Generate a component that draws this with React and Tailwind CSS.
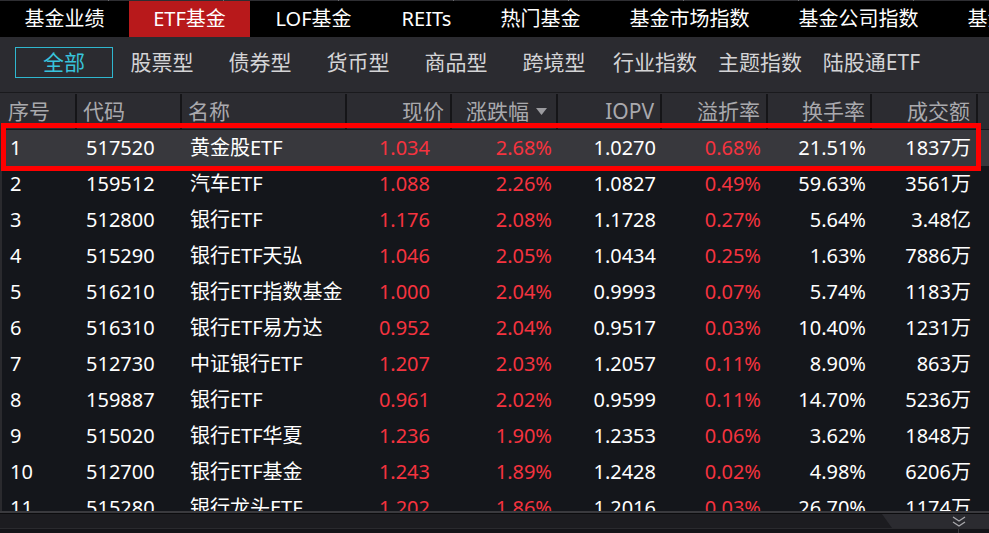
import React from "react";

const topTabs = [
  { t: "基金业绩", w: "w-[129px]" },
  { t: "ETF基金", w: "w-[121px]", active: true },
  { t: "LOF基金", w: "w-[127px]" },
  { t: "REITs", w: "w-[99px]" },
  { t: "热门基金", w: "w-[129px]" },
  { t: "基金市场指数", w: "w-[169px]" },
  { t: "基金公司指数", w: "w-[169px]" },
  { t: "基金经理", w: "w-[129px]" },
];

const subTabs = [
  { t: "全部", w: "w-[98px]", active: true },
  { t: "股票型", w: "w-[98px]" },
  { t: "债券型", w: "w-[98px]" },
  { t: "货币型", w: "w-[98px]" },
  { t: "商品型", w: "w-[98px]" },
  { t: "跨境型", w: "w-[98px]" },
  { t: "行业指数", w: "w-[104px]" },
  { t: "主题指数", w: "w-[106px]" },
  { t: "陆股通ETF", w: "w-[117px]" },
];

const rows = [
  ["1", "517520", "黄金股ETF", "1.034", "2.68%", "1.0270", "0.68%", "21.51%", "1837万"],
  ["2", "159512", "汽车ETF", "1.088", "2.26%", "1.0827", "0.49%", "59.63%", "3561万"],
  ["3", "512800", "银行ETF", "1.176", "2.08%", "1.1728", "0.27%", "5.64%", "3.48亿"],
  ["4", "515290", "银行ETF天弘", "1.046", "2.05%", "1.0434", "0.25%", "1.63%", "7886万"],
  ["5", "516210", "银行ETF指数基金", "1.000", "2.04%", "0.9993", "0.07%", "5.74%", "1183万"],
  ["6", "516310", "银行ETF易方达", "0.952", "2.04%", "0.9517", "0.03%", "10.40%", "1231万"],
  ["7", "512730", "中证银行ETF", "1.207", "2.03%", "1.2057", "0.11%", "8.90%", "863万"],
  ["8", "159887", "银行ETF", "0.961", "2.02%", "0.9599", "0.11%", "14.70%", "5236万"],
  ["9", "515020", "银行ETF华夏", "1.236", "1.90%", "1.2353", "0.06%", "3.62%", "1848万"],
  ["10", "512700", "银行ETF基金", "1.243", "1.89%", "1.2428", "0.02%", "4.98%", "6206万"],
  ["11", "515280", "银行龙头ETF", "1.202", "1.86%", "1.2016", "0.03%", "26.70%", "1174万"],
];

const cols = [
  "w-[77px]",
  "w-[105px]",
  "w-[165px]",
  "w-[105px]",
  "w-[106px]",
  "w-[104px]",
  "w-[106px]",
  "w-[104px]",
  "w-[106px]",
];

export default function App() {
  return (
    <div className="relative w-[989px] h-[533px] overflow-hidden bg-[#14161b] font-['Noto_Sans','Noto_Sans_CJK_SC',sans-serif] flex flex-col">
      {/* top thin line with ticks */}
      <div className="h-px bg-[#2e2e32] flex shrink-0">
        <div className="w-[108px] shrink-0" />
        {Array.from({ length: 8 }).map((_, i) => (
          <div key={i} className="w-[115px] shrink-0 border-l border-[#6a6a6e]" />
        ))}
      </div>
      {/* top tabs */}
      <div className="h-[36px] bg-black flex shrink-0 overflow-hidden">
        {topTabs.map((tab) => (
          <div
            key={tab.t}
            className={`${tab.w} shrink-0 h-full flex items-center justify-center text-[20px] text-white ${
              tab.active ? "bg-[#b8191b]" : ""
            }`}
          >
            {tab.t}
          </div>
        ))}
      </div>
      {/* sub tabs */}
      <div className="h-[55px] bg-[#2b2b30] flex items-start pt-[10px] pl-[15px] shrink-0">
        {subTabs.map((tab) => (
          <div
            key={tab.t}
            className={`${tab.w} shrink-0 h-[31px] flex items-center justify-center text-[21px] ${
              tab.active ? "border border-[#2fb7cf] text-[#38c3dc]" : "text-[#d4d4d6]"
            }`}
          >
            {tab.t}
          </div>
        ))}
      </div>
      {/* header */}
      <div className="h-[37px] pt-px bg-[#2c2c31] border-t border-[#1a1a1d] flex shrink-0 text-[21px] text-[#a9a9ad]">
        <div className={`${cols[0]} shrink-0 border-r-2 border-[#151518] flex items-center pl-[8px]`}>序号</div>
        <div className={`${cols[1]} shrink-0 border-r-2 border-[#151518] flex items-center pl-[6px]`}>代码</div>
        <div className={`${cols[2]} shrink-0 border-r-2 border-[#151518] flex items-center pl-[6px]`}>名称</div>
        <div className={`${cols[3]} shrink-0 border-r-2 border-[#151518] flex items-center justify-end pr-[6px]`}>现价</div>
        <div className={`${cols[4]} shrink-0 border-r-2 border-[#151518] flex items-center justify-end pr-[9px] gap-[7px]`}>
          <span>涨跌幅</span>
          <svg width="11" height="7" viewBox="0 0 11 7">
            <path d="M0 0 H11 L5.5 7 Z" fill="#9b9b9f" />
          </svg>
        </div>
        <div className={`${cols[5]} shrink-0 border-r-2 border-[#151518] flex items-center justify-end pr-[6px]`}>IOPV</div>
        <div className={`${cols[6]} shrink-0 border-r-2 border-[#151518] flex items-center justify-end pr-[6px]`}>溢折率</div>
        <div className={`${cols[7]} shrink-0 border-r-2 border-[#151518] flex items-center justify-end pr-[5px]`}>换手率</div>
        <div className={`${cols[8]} shrink-0 border-r-2 border-[#151518] flex items-center justify-end pr-[6px]`}>成交额</div>
        <div className="flex-1" />
      </div>
      {/* body */}
      <div className="flex-1 overflow-hidden border-l-2 border-[#2a2a2e] text-[20px] pt-px">
        {rows.map((r, i) => (
          <div key={r[0]} className={`h-[36px] flex items-center ${i === 0 ? "bg-[#38383d]" : ""}`}>
            <div className={`${cols[0]} shrink-0 pl-[8px] text-white`}>{r[0]}</div>
            <div className={`${cols[1]} shrink-0 pl-[7px] text-white`}>{r[1]}</div>
            <div className={`${cols[2]} shrink-0 pl-[6px] text-white whitespace-nowrap`}>{r[2]}</div>
            <div className={`${cols[3]} shrink-0 text-right pr-[24px] text-[#f5333f]`}>{r[3]}</div>
            <div className={`${cols[4]} shrink-0 text-right pr-[8px] text-[#f5333f]`}>{r[4]}</div>
            <div className={`${cols[5]} shrink-0 text-right pr-[8px] text-white`}>{r[5]}</div>
            <div className={`${cols[6]} shrink-0 text-right pr-[9px] text-[#f5333f]`}>{r[6]}</div>
            <div className={`${cols[7]} shrink-0 text-right pr-[8px] text-white`}>{r[7]}</div>
            <div className={`${cols[8]} shrink-0 text-right pr-[9px] text-white`}>{r[8]}</div>
          </div>
        ))}
      </div>
      {/* bottom scroll bar */}
      <div className="h-[22px] shrink-0 flex flex-col">
        <div className="h-[2px] bg-[#3a3a3e]" />
        <div className="h-[15px] bg-[#1c1c20] border-t border-[#0c0c0e] flex relative">
          <div className="flex-1" />
          <div className="w-[107px] h-full bg-[#2b2b30] [clip-path:polygon(0_0,100%_0,100%_100%,10px_100%)] flex items-center justify-end pr-[23px]">
            <svg width="14" height="11" viewBox="0 0 14 11">
              <path d="M1 1 L7 5 L13 1 M1 6 L7 10 L13 6" fill="none" stroke="#a8a8ac" strokeWidth="1.3" />
            </svg>
          </div>
        </div>
        <div className="flex-1 bg-[#141418] border-t border-[#2a2a2e] flex">
          <div className="w-[958px]" />
          <div className="w-px bg-[#3a3a3e]" />
        </div>
      </div>
      {/* red highlight overlay */}
      <div className="absolute left-[1px] top-[123px] w-[980px] h-[48px] border-[5px] border-[#ff0000] pointer-events-none" />
    </div>
  );
}
